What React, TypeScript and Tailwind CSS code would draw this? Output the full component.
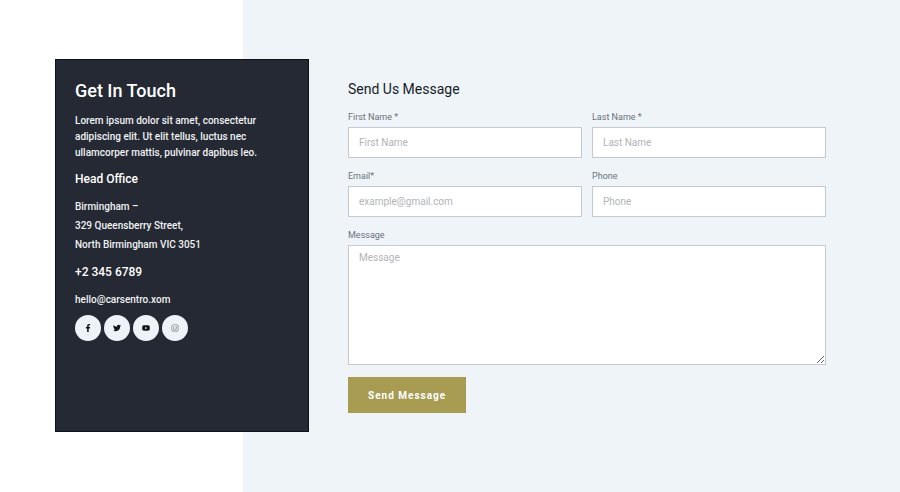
import React, { useState } from 'react';
import { FaFacebookF, FaTwitter, FaYoutube, FaInstagram } from 'react-icons/fa';

const socials = [
  { name: 'Facebook', icon: FaFacebookF, color: 'text-[#10151f]' },
  { name: 'Twitter', icon: FaTwitter, color: 'text-[#10151f]' },
  { name: 'YouTube', icon: FaYoutube, color: 'text-[#10151f]' },
  { name: 'Instagram', icon: FaInstagram, color: 'text-[#6f7378]' },
];

const fields = [
  { id: 'firstName', label: 'First Name *', placeholder: 'First Name', type: 'text', required: true },
  { id: 'lastName', label: 'Last Name *', placeholder: 'Last Name', type: 'text', required: true },
  { id: 'email', label: 'Email*', placeholder: 'example@gmail.com', type: 'email', required: true },
  { id: 'phone', label: 'Phone', placeholder: 'Phone', type: 'tel', required: false },
];

const ContactCard: React.FC = () => (
  <aside className="w-[254px] shrink-0 border border-[#0b101b] bg-[#242933] px-[19px] pt-[19px] pb-[90px] text-[10px] font-medium text-[#f1f2f4]">
    <h2 className="text-[18px] leading-6 font-medium text-white">Get In Touch</h2>
    <p className="mt-[10px] leading-4">
      Lorem ipsum dolor sit amet, consectetur
      <br />
      adipiscing elit. Ut elit tellus, luctus nec
      <br />
      ullamcorper mattis, pulvinar dapibus leo.
    </p>
    <h3 className="mt-2 text-[12px] leading-5 font-medium text-white">Head Office</h3>
    <address className="mt-2 leading-[19px] not-italic">
      Birmingham –<br />
      329 Queensberry Street,<br />
      North Birmingham VIC 3051
    </address>
    <h3 className="mt-2 text-[12px] leading-5 font-medium text-white">+2 345 6789</h3>
    <a href="mailto:hello@carsentro.xom" className="mt-2 block leading-[19px]">
      hello@carsentro.xom
    </a>
    <ul className="mt-[6px] flex gap-[3px]">
      {socials.map(({ name, icon: Icon, color }) => (
        <li key={name}>
          <a
            href="#"
            aria-label={name}
            className={`flex size-[26px] items-center justify-center rounded-full bg-[#eef3fa] ${color}`}
          >
            <Icon className="size-2" />
          </a>
        </li>
      ))}
    </ul>
  </aside>
);

const ContactForm: React.FC = () => {
  const [values, setValues] = useState<Record<string, string>>({});

  const handleChange = (e: React.ChangeEvent<HTMLInputElement | HTMLTextAreaElement>) => {
    setValues({ ...values, [e.target.name]: e.target.value });
  };

  return (
    <form className="min-w-0 flex-1 pt-[18px]" onSubmit={(e) => e.preventDefault()}>
      <h2 className="text-[14px] leading-6 text-[#171c27]">Send Us Message</h2>
      <div className="mt-[6px] grid grid-cols-2 gap-x-[10px] gap-y-2">
        {fields.map((field) => (
          <div key={field.id}>
            <label htmlFor={field.id} className="block text-[9px] leading-5 text-[#6c727c]">
              {field.label}
            </label>
            <input
              id={field.id}
              name={field.id}
              type={field.type}
              required={field.required}
              placeholder={field.placeholder}
              value={values[field.id] ?? ''}
              onChange={handleChange}
              className="block h-[31px] w-full border border-[#c3c9ce] bg-white px-[10px] text-[10px] text-[#333] placeholder:text-[#b2b4b6]"
            />
          </div>
        ))}
        <div className="col-span-2">
          <label htmlFor="message" className="block text-[9px] leading-5 text-[#6c727c]">
            Message
          </label>
          <textarea
            id="message"
            name="message"
            placeholder="Message"
            value={values.message ?? ''}
            onChange={handleChange}
            className="block h-[120px] w-full resize border border-[#c3c9ce] bg-white px-[10px] py-1 text-[10px] leading-4 text-[#333] placeholder:text-[#b2b4b6]"
          />
        </div>
      </div>
      <button
        type="submit"
        className="mt-3 h-9 bg-[#a79c52] px-5 text-[10px] font-bold tracking-[1px] text-white"
      >
        Send Message
      </button>
    </form>
  );
};

const App: React.FC = () => {
  return (
    <main className="min-h-screen bg-linear-to-r from-white from-27% to-[#eef4f8] to-27% py-[59px] pr-[74px] pl-[55px] font-['Roboto',sans-serif]">
      <section className="flex gap-[39px]">
        <ContactCard />
        <ContactForm />
      </section>
    </main>
  );
};

export default App;
